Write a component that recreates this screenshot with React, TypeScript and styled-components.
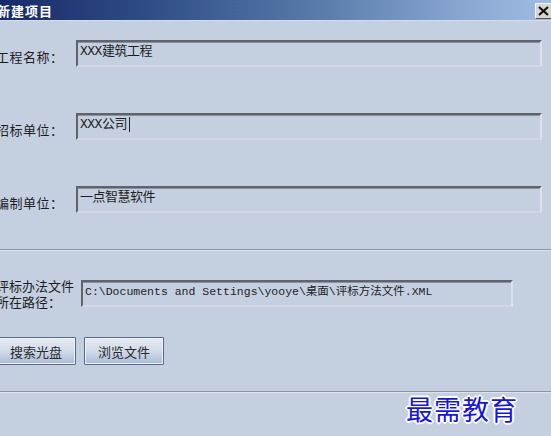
import styled, { createGlobalStyle } from 'styled-components'

const GlobalStyle = createGlobalStyle`
  html, body {
    margin: 0;
    padding: 0;
    background: #c4cfe0;
  }
  body {
    font-family: "Noto Sans CJK SC", "Liberation Sans", sans-serif;
  }
`

const fields = [
  { label: '工程名称：', value: 'XXX建筑工程', gap: 19 },
  { label: '招标单位：', value: 'XXX公司', gap: 46, caret: true },
  { label: '编制单位：', value: '一点智慧软件', gap: 46 },
]

export default function App() {
  return (
    <>
      <GlobalStyle />
      <Window>
        <TitleBar>
          <Title>新建项目</Title>
          <CloseBtn>
            <svg width="11" height="10" viewBox="0 0 11 10">
              <path d="M1 1 L10 9 M10 1 L1 9" stroke="#111" strokeWidth="2.2" />
            </svg>
          </CloseBtn>
        </TitleBar>

        {fields.map(f => (
          <FieldRow key={f.label} $gap={f.gap}>
            <Label>{f.label}</Label>
            <InputBox $width={466}>
              <InputText>
                {f.value}
                {f.caret && <Caret />}
              </InputText>
            </InputBox>
          </FieldRow>
        ))}

        <Separator $top={36} />

        <PathRow>
          <PathLabel>
            <div>评标办法文件</div>
            <div>所在路径：</div>
          </PathLabel>
          <InputBox $width={432}>
            <PathText>C:\Documents and Settings\yooye\桌面\评标方法文件.XML</PathText>
          </InputBox>
        </PathRow>

        <ButtonRow>
          <Button>搜索光盘</Button>
          <Button>浏览文件</Button>
        </ButtonRow>

        <Separator $top={26} />

        <Footer>
          <Watermark>最需教育</Watermark>
          <FooterButtons>
            <Button $wide />
            <Button $wide />
          </FooterButtons>
        </Footer>
      </Window>
    </>
  )
}

const Window = styled.div`
  width: 551px;
  height: 436px;
  overflow: hidden;
  background: #c4cfe0;
  display: flex;
  flex-direction: column;
`

const TitleBar = styled.div`
  height: 20px;
  flex-shrink: 0;
  display: flex;
  justify-content: space-between;
  align-items: center;
  background: linear-gradient(to right, #172a68 0%, #2d4a85 25%, #5576a6 55%, #8aa8d2 85%, #9fbde2 100%);
  border-bottom: 1px solid #d6dde9;
`

const Title = styled.div`
  margin-left: -3px;
  color: #fff;
  font-size: 13px;
  font-weight: 700;
  letter-spacing: 1px;
`

const CloseBtn = styled.div`
  width: 15px;
  height: 14px;
  margin-top: 2px;
  background: #d8d6d0;
  border-top: 1px solid #f4f4f4;
  border-left: 1px solid #f4f4f4;
  border-bottom: 1px solid #555;
  display: flex;
  align-items: center;
  justify-content: center;
`

const FieldRow = styled.div<{ $gap: number }>`
  display: flex;
  align-items: center;
  margin-top: ${p => p.$gap}px;
`

const Label = styled.div`
  width: 80px;
  margin-left: -4px;
  padding-top: 6px;
  font-size: 13px;
  color: #1e1e1e;
  white-space: nowrap;
  letter-spacing: 0.5px;
`

const InputBox = styled.div<{ $width: number }>`
  box-sizing: border-box;
  width: ${p => p.$width}px;
  height: 27px;
  border-top: 2px solid #5f636b;
  border-left: 2px solid #5f636b;
  border-right: 2px solid #dde1e8;
  border-bottom: 2px solid #d3d8e0;
  box-shadow: inset 0 1px 0 #8c9099;
  background: #c4cfe0;
  padding: 1px 2px;
`

const InputText = styled.div`
  display: flex;
  align-items: center;
  font-family: "Liberation Mono", "Noto Sans CJK SC", monospace;
  font-size: 13px;
  line-height: 17px;
  color: #1e1e1e;
  letter-spacing: -0.5px;
`

const Caret = styled.span`
  display: inline-block;
  width: 1px;
  height: 15px;
  margin-left: 2px;
  background: #222;
`

const Separator = styled.div<{ $top: number }>`
  margin-top: ${p => p.$top}px;
  height: 1px;
  flex-shrink: 0;
  background: #8e949e;
  border-bottom: 1px solid #dfe4ec;
`

const PathRow = styled.div`
  display: flex;
  align-items: center;
  margin-top: 25px;
`

const PathLabel = styled.div`
  width: 85px;
  margin-left: -4px;
  font-size: 13px;
  line-height: 16px;
  color: #1e1e1e;
  white-space: nowrap;
  padding-top: 2px;
`

const PathText = styled.div`
  font-family: "Liberation Mono", "Noto Sans CJK SC", monospace;
  font-size: 11.5px;
  line-height: 17px;
  color: #1e1e1e;
  white-space: nowrap;
`

const ButtonRow = styled.div`
  display: flex;
  gap: 8px;
  margin-top: 27px;
  margin-left: -4px;
`

const Button = styled.div<{ $wide?: boolean }>`
  box-sizing: border-box;
  width: ${p => (p.$wide ? 83 : 80)}px;
  height: 28px;
  border: 1px solid #56698e;
  border-radius: 1px;
  background: linear-gradient(to bottom, #e6ebf3 0%, #d2dbe9 50%, #a8bbd9 100%);
  box-shadow: inset 0 0 0 1px #eef1f6;
  display: flex;
  align-items: center;
  justify-content: center;
  font-size: 13px;
  color: #2a2a2a;
  flex-shrink: 0;
`

const Footer = styled.div`
  position: relative;
  flex: 1;
`

const Watermark = styled.div`
  position: absolute;
  right: 33px;
  top: -4px;
  font-family: "Noto Sans CJK SC", serif;
  font-size: 27px;
  font-weight: 400;
  letter-spacing: 1px;
  color: #1414e8;
  text-shadow:
    1px 1px 0 #fff, -1px -1px 0 #fff, 1px -1px 0 #fff, -1px 1px 0 #fff,
    2px 0 0 #fff, -2px 0 0 #fff, 0 2px 0 #fff, 0 -2px 0 #fff;
`

const FooterButtons = styled.div`
  display: flex;
  gap: 8px;
  padding-left: 350px;
  padding-top: 45px;
`
